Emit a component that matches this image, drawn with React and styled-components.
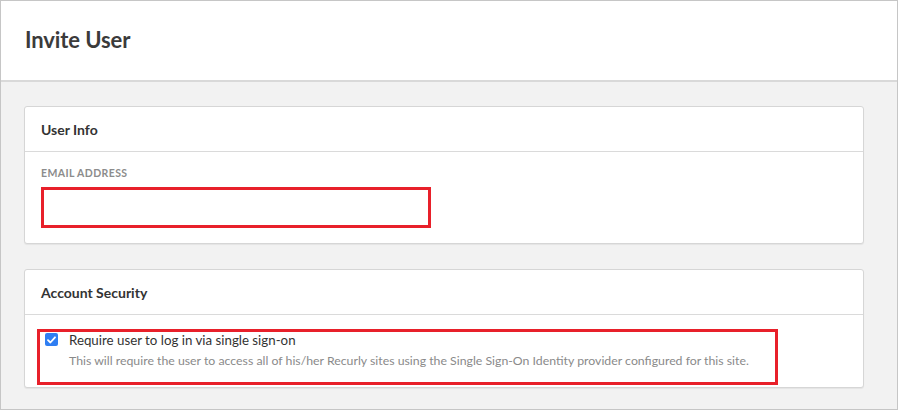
import styled, { createGlobalStyle } from "styled-components";

const GlobalStyle = createGlobalStyle`
  html, body {
    margin: 0;
    padding: 0;
    background: #ffffff;
  }
  body {
    font-family: "Lato", "Open Sans", sans-serif;
    color: #333333;
  }
`;

const Frame = styled.div`
  width: 898px;
  height: 410px;
  box-sizing: border-box;
  border: 1px solid #c6c6c6;
  display: flex;
  flex-direction: column;
  background: #f2f2f2;
  overflow: hidden;
`;

const Header = styled.div`
  height: 79px;
  background: #ffffff;
  border-bottom: 2px solid #d9d9d9;
  display: flex;
  align-items: center;
  padding-left: 24px;
  flex-shrink: 0;
`;

const Title = styled.h1`
  margin: 0 0 2px;
  font-size: 22px;
  font-weight: 700;
  color: #3b3b3b;
  letter-spacing: -0.1px;
`;

const Content = styled.div`
  padding: 24px 33px 0 23px;
  display: flex;
  flex-direction: column;
  gap: 25px;
`;

const Card = styled.section`
  background: #ffffff;
  border: 1px solid #d6d6d6;
  border-radius: 3px;
  box-shadow: 0 1px 1px rgba(0, 0, 0, 0.06);
`;

const CardHeader = styled.div`
  height: 44px;
  border-bottom: 1px solid #dadada;
  display: flex;
  align-items: center;
  padding-left: 16px;
`;

const CardTitle = styled.h2`
  margin: 0;
  font-size: 14px;
  font-weight: 700;
  color: #333333;
`;

const CardBody = styled.div`
  padding: ${(p) => p.$pad};
`;

const FieldLabel = styled.div`
  font-size: 10.5px;
  font-weight: 700;
  color: #8c8c8c;
  letter-spacing: 0.4px;
  text-transform: uppercase;
  line-height: 12px;
`;

const Highlight = styled.div`
  border: 3px solid #e8202a;
  box-sizing: border-box;
  width: ${(p) => p.$w}px;
  height: ${(p) => p.$h}px;
  margin-top: ${(p) => p.$mt || 0}px;
`;

const EmailInput = styled.input`
  width: 100%;
  height: 100%;
  border: none;
  outline: none;
  background: transparent;
  padding: 0 8px;
  box-sizing: border-box;
  font-family: inherit;
  font-size: 13px;
`;

const CheckRow = styled.label`
  display: flex;
  gap: 11px;
  padding: 0 0 0 5px;
`;

const Box = styled.span`
  width: 13px;
  height: 13px;
  border-radius: 2px;
  background: #2f7ef2;
  display: flex;
  align-items: center;
  justify-content: center;
  flex-shrink: 0;
  margin-top: 1px;
`;

const CheckText = styled.div`
  display: flex;
  flex-direction: column;
  gap: 5px;
`;

const CheckLabel = styled.span`
  font-size: 13.3px;
  color: #333333;
  line-height: 16px;
`;

const Hint = styled.span`
  font-size: 12.3px;
  color: #8a8a8a;
  line-height: 15px;
`;

export default function App() {
  return (
    <>
      <GlobalStyle />
      <Frame>
        <Header>
          <Title>Invite User</Title>
        </Header>
        <Content>
          <Card>
            <CardHeader>
              <CardTitle>User Info</CardTitle>
            </CardHeader>
            <CardBody $pad="15px 16px 15px 16px">
              <FieldLabel>Email Address</FieldLabel>
              <Highlight $w={390} $h={41} $mt={8}>
                <EmailInput type="email" />
              </Highlight>
            </CardBody>
          </Card>
          <Card>
            <CardHeader>
              <CardTitle>Account Security</CardTitle>
            </CardHeader>
            <CardBody $pad="14px 12px 2px 12px">
              <Highlight $w={741} $h={56}>
                <CheckRow>
                  <Box>
                    <svg width="9" height="8" viewBox="0 0 9 8">
                      <path d="M1 4.2 L3.4 6.5 L8 1.3" stroke="#ffffff" strokeWidth="1.8" fill="none" strokeLinecap="round" strokeLinejoin="round" />
                    </svg>
                  </Box>
                  <CheckText>
                    <CheckLabel>Require user to log in via single sign-on</CheckLabel>
                    <Hint>This will require the user to access all of his/her Recurly sites using the Single Sign-On Identity provider configured for this site.</Hint>
                  </CheckText>
                </CheckRow>
              </Highlight>
            </CardBody>
          </Card>
        </Content>
      </Frame>
    </>
  );
}
